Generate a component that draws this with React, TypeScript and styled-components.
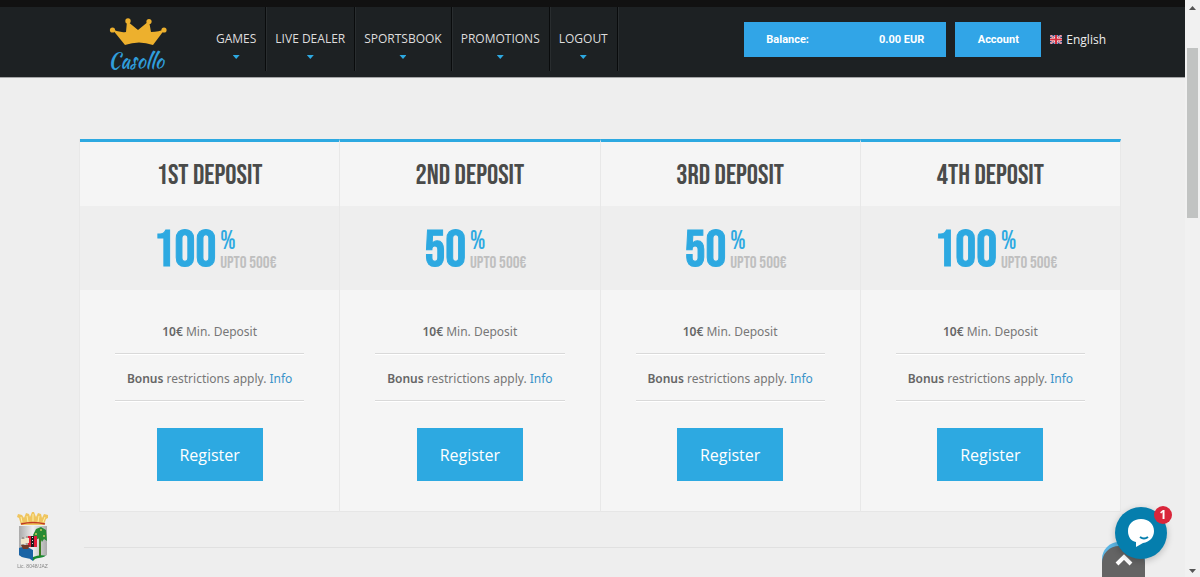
import React from "react";
import styled, { createGlobalStyle } from "styled-components";

const blue = "#2da9e1";
const condensed = `"Bebas Neue", "Liberation Sans Narrow", "Roboto Condensed", "Open Sans Condensed", "Liberation Sans", sans-serif`;

const GlobalStyle = createGlobalStyle`
  *, *::before, *::after { box-sizing: border-box; }
  html { scrollbar-width: none; }
  body {
    margin: 0;
    background: #eeeeee;
    color: #777777;
    font: 13px/20px "Open Sans", sans-serif;
  }
  a { text-decoration: none; }
  button { border: 0; margin: 0; padding: 0; cursor: pointer; }
  ul { list-style: none; margin: 0; padding: 0; }
`;

const Header = styled.header`
  background: #1d2123;
  border-top: 7px solid #111111;
  border-bottom: 1px solid #a4a5a6;
`;

const HeaderInner = styled.div`
  display: flex;
  max-width: 1040px;
  height: 70px;
  margin: 0 auto;
  padding: 0 14px 0 28px;
  align-items: flex-start;
`;

const Logo = styled.a`
  display: flex;
  flex-direction: column;
  align-items: center;
  width: 60px;
  margin-right: 39px;
  padding-top: 11px;
  color: #309ddb;
`;

const LogoName = styled.span`
  margin: 3px 4px 0 0;
  font: 20px/24px "Kaushan Script", "Yellowtail", "Damion", "Satisfy", "Dancing Script", "Pacifico", "Lobster", cursive;
`;

const NavList = styled.ul`
  display: flex;
`;

const NavItem = styled.li`
  border-right: 1px solid #090b0c;
  box-shadow: 1px 0 0 #292d2f;
`;

const NavLink = styled.a`
  display: flex;
  flex-direction: column;
  align-items: center;
  height: 64px;
  padding: 22px 9px 0;
  color: #dddddd;
  font-size: 12px;
  line-height: 20px;
`;

const Arrow = styled.span`
  width: 7px;
  height: 4px;
  margin-top: 6px;
  background: ${blue};
  clip-path: polygon(0 0, 100% 0, 50% 100%);
`;

const AccountBar = styled.div`
  display: flex;
  align-items: center;
  gap: 9px;
  margin-left: auto;
  padding-top: 15px;
  font: bold 11px/35px Roboto, sans-serif;
`;

const Balance = styled.div`
  display: flex;
  justify-content: space-between;
  width: 202px;
  padding: 0 22px;
  background: #31a5e7;
  color: #ffffff;
`;

const AccountButton = styled.button`
  width: 86px;
  height: 35px;
  background: #31a5e7;
  color: #ffffff;
  font: inherit;
`;

const Language = styled.a`
  display: flex;
  align-items: center;
  gap: 4px;
  color: #eeeeee;
  font: 12px/32px "Open Sans", sans-serif;
`;

const Main = styled.main`
  max-width: 1042px;
  margin: 0 auto;
  padding-top: 61px;
`;

const Plans = styled.section`
  display: grid;
  grid-template-columns: repeat(4, 1fr);
  border-left: 1px solid #e8e8e8;
`;

const Plan = styled.article`
  border-top: 3px solid ${blue};
  border-right: 1px solid #e8e8e8;
  border-bottom: 1px solid #e6e6e6;
  background: #f5f5f5;
  text-align: center;
`;

const PlanTitle = styled.h2`
  margin: 0;
  padding-top: 3px;
  color: #4a4b4a;
  font: normal 28px/61px ${condensed};
`;

const Price = styled.div`
  display: flex;
  justify-content: center;
  align-items: center;
  gap: 4px;
  height: 84px;
  padding: 6px 0 0 11px;
  background: #eeeeee;
  color: ${blue};
  font-family: ${condensed};
`;

const Amount = styled.strong`
  font-size: 52px;
  font-weight: normal;
  line-height: 56px;
  -webkit-text-stroke: 1px ${blue};
`;

const PriceNotes = styled.div`
  display: flex;
  flex-direction: column;
  align-items: flex-start;
`;

const Percent = styled.span`
  font-size: 26px;
  line-height: 24px;
`;

const UpTo = styled.span`
  color: #bfbfbf;
  font-size: 17px;
  line-height: 18px;
`;

const PlanBody = styled.div`
  padding: 17px 35px 30px;
`;

const Terms = styled.ul`
  margin-bottom: 27px;
  font: 12px/24px "Noto Sans", "Open Sans", sans-serif;
  white-space: nowrap;
`;

const Term = styled.li`
  height: 47px;
  padding-top: 13px;
  border-bottom: 1px solid #d9d9d9;
  box-shadow: 0 1px 0 #ffffff;

  b { color: #666666; font-weight: 600; }
  a { color: #3a93c9; }
`;

const RegisterButton = styled.button`
  width: 106px;
  height: 53px;
  background: ${blue};
  color: #ffffff;
  font: 16px/24px "Open Sans", sans-serif;
`;

const Divider = styled.hr`
  height: 1px;
  margin: 35px 5px 40px;
  border: 0;
  background: #e0e0e0;
`;

const License = styled.a`
  position: fixed;
  left: 16px;
  bottom: 7px;
  display: flex;
  flex-direction: column;
  align-items: center;
  width: 33px;
  color: #858585;
  font: 5px/8px "Liberation Sans", sans-serif;
  white-space: nowrap;
`;

const BackToTop = styled.button`
  position: fixed;
  right: 55px;
  bottom: 0;
  width: 43px;
  height: 31px;
  border-radius: 17px 17px 0 0;
  background: #646464;
  box-shadow: 0 -4px 0 #5cb5e3;
`;

const ChatButton = styled.button`
  position: fixed;
  right: 33px;
  bottom: 18px;
  width: 52px;
  height: 52px;
  border-radius: 50%;
  background: #057ead;
  box-shadow: 0 2px 7px rgba(0, 0, 0, 0.22);
  line-height: 0;
`;

const Badge = styled.span`
  position: absolute;
  top: -1px;
  right: -5px;
  width: 18px;
  height: 18px;
  border-radius: 50%;
  background: #d9263b;
  color: #ffffff;
  font: bold 12px/18px "Open Sans", sans-serif;
`;

const ScrollRail = styled.div`
  position: fixed;
  top: 0;
  right: 0;
  bottom: 0;
  display: flex;
  flex-direction: column;
  align-items: center;
  justify-content: space-between;
  width: 15px;
  padding: 6px 0 4px;
  background: #f1f1f1;
`;

const ScrollThumb = styled.div`
  width: 11px;
  height: 170px;
  margin: 38px 0 auto;
  background: #c1c3c2;
`;

const Crown = () => (
  <svg width="58" height="28" viewBox="0 0 58 28" fill="#edb02d" aria-hidden="true">
    <path d="M3 11 Q10 15 17 14 L18 3 L29 12 L40 3 L42 14 Q50 14 56 11 L44 27 Q30 22 16 27Z" />
    <circle cx="3.500" cy="12" r="2.600" />
    <circle cx="19" cy="3" r="2.700" />
    <circle cx="40" cy="3.500" r="2.600" />
    <circle cx="55" cy="12" r="2.600" />
  </svg>
);

const Flag = () => (
  <svg width="12" height="9" viewBox="0 0 12 9" aria-hidden="true">
    <rect width="12" height="9" fill="#2d3d7a" />
    <path d="M0 0L12 9M12 0L0 9" stroke="#e9dce2" strokeWidth="2" />
    <path d="M0 0L12 9M12 0L0 9" stroke="#d43c4b" strokeWidth="0.800" />
    <path d="M6 0V9M0 4.500H12" stroke="#fff" strokeWidth="3" />
    <path d="M6 0V9M0 4.500H12" stroke="#d42d3e" strokeWidth="2" />
  </svg>
);

const Crest = () => (
  <svg width="33" height="50" viewBox="0 0 33 50" aria-hidden="true">
    <defs>
      <linearGradient id="shield">
        <stop offset="0" stopColor="#aaa" />
        <stop offset=".5" stopColor="#eee" />
        <stop offset="1" stopColor="#aaa" />
      </linearGradient>
      <clipPath id="shieldEdge"><path d="M3 14H31V43Q27 46 23 46Q19 46 17 49Q14 46 10 46Q6 46 3 43Z" /></clipPath>
    </defs>
    <g clipPath="url(#shieldEdge)">
      <path d="M3 14H31V49H3Z" fill="url(#shield)" />
      <path d="M3 36Q10 33 17 38V49H3Z" fill="#1b64a5" />
      <path d="M17 45Q24 42 31 44V49H17Z" fill="#168a31" />
      <path d="M24 44V25" stroke="#397b20" strokeWidth="2" />
      <path d="M17 23L20 17L25 15L30 18L31 29L28 27L26 30L24 26L19 28Z" fill="#278b33" />
      <path d="M19 22H21M24 18H26M27 24H29" stroke="#a1b955" strokeWidth="2" />
      <path d="M12 24H21V35H12Z" fill="#e21b36" />
      <path d="M16.500 24V35" stroke="#201c1d" strokeWidth="3" />
      <path d="M16.500 25V34" stroke="#d9d9d9" strokeDasharray="1 2" />
      <path d="M5 33H14L12 37H7Z" fill="#713b29" />
      <path d="M7 25V33M11 24V33" stroke="#80735e" />
      <path d="M5 27H9V32H5ZM9 26H13V31H9Z" fill="#f0e5cb" />
    </g>
    <path d="M5 13L3 6L1 5L2 2L6 3L8 6L10 1L13 2L14 5L16 0H18L20 5L22 1L25 2L26 6L28 2L32 3L32 6L30 7L28 13Z" fill="#efc55f" />
    <path d="M6 10L5 5M12 10L11 4M17 10V2M22 10L23 4M27 10L29 5" stroke="#fff0a4" />
    <path d="M5 12Q17 9 29 12" fill="none" stroke="#c03b25" strokeWidth="1.500" />
  </svg>
);

const ScrollArrow = ({ down = false }: { down?: boolean }) => (
  <svg width="7" height="4" viewBox="0 0 7 4" fill="#555" aria-hidden="true">
    <path d={down ? "M0 0H7L3.500 4Z" : "M0 4H7L3.500 0Z"} />
  </svg>
);

const navigation = ["GAMES", "LIVE DEALER", "SPORTSBOOK", "PROMOTIONS", "LOGOUT"];
const plans = [
  { title: "1ST DEPOSIT", amount: 100 },
  { title: "2ND DEPOSIT", amount: 50 },
  { title: "3RD DEPOSIT", amount: 50 },
  { title: "4TH DEPOSIT", amount: 100 },
];

export default function App() {
  return (
    <>
      <GlobalStyle />
      <Header>
        <HeaderInner>
          <Logo href="#"><Crown /><LogoName>Casollo</LogoName></Logo>
          <nav>
            <NavList>
              {navigation.map((label) => (
                <NavItem key={label}><NavLink href="#">{label}<Arrow /></NavLink></NavItem>
              ))}
            </NavList>
          </nav>
          <AccountBar>
            <Balance><span>Balance:</span><span>0.00 EUR</span></Balance>
            <AccountButton>Account</AccountButton>
            <Language href="#"><Flag />English</Language>
          </AccountBar>
        </HeaderInner>
      </Header>
      <Main>
        <Plans>
          {plans.map(({ title, amount }) => (
            <Plan key={title}>
              <PlanTitle>{title}</PlanTitle>
              <Price>
                <Amount>{amount}</Amount>
                <PriceNotes><Percent>%</Percent><UpTo>UPTO 500€</UpTo></PriceNotes>
              </Price>
              <PlanBody>
                <Terms>
                  <Term><b>10€</b> Min. Deposit</Term>
                  <Term><b>Bonus</b> restrictions apply. <a href="#">Info</a></Term>
                </Terms>
                <RegisterButton>Register</RegisterButton>
              </PlanBody>
            </Plan>
          ))}
        </Plans>
        <Divider />
      </Main>
      <License href="#"><Crest />Lic. 8048/JAZ</License>
      <BackToTop aria-label="Back to top">
        <svg width="18" height="12" viewBox="0 0 18 12" fill="none" stroke="#fff" strokeWidth="4" aria-hidden="true">
          <path d="M2 10L9 3L16 10" />
        </svg>
      </BackToTop>
      <ChatButton aria-label="Open chat">
        <svg width="26" height="28" viewBox="0 0 26 28" aria-hidden="true">
          <path d="M13 0C5 0 0 5 0 12C0 18 3 22 8 23L8 28L15 24C22 23 26 18 26 12C26 5 21 0 13 0Z" fill="#fff" />
          <path d="M12 18Q16 21 20 18" fill="none" stroke="#057ead" strokeWidth="2" />
        </svg>
        <Badge>1</Badge>
      </ChatButton>
      <ScrollRail><ScrollArrow /><ScrollThumb /><ScrollArrow down /></ScrollRail>
    </>
  );
}
